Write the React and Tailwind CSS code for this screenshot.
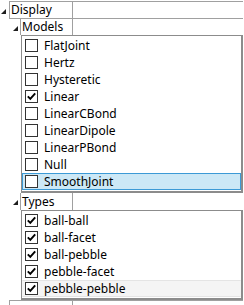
import React from 'react';

const models = [
  { label: 'FlatJoint' },
  { label: 'Hertz' },
  { label: 'Hysteretic' },
  { label: 'Linear', checked: true },
  { label: 'LinearCBond' },
  { label: 'LinearDipole' },
  { label: 'LinearPBond' },
  { label: 'Null' },
  { label: 'SmoothJoint', state: 'selected' },
];

const types = [
  { label: 'ball-ball', checked: true },
  { label: 'ball-facet', checked: true },
  { label: 'ball-pebble', checked: true },
  { label: 'pebble-facet', checked: true },
  { label: 'pebble-pebble', checked: true, state: 'hover' },
];

const Expander = () => (
  <svg width="5" height="5" viewBox="0 0 5 5">
    <path d="M5 0 L5 5 L0 5 Z" fill="#1e1e1e" />
  </svg>
);

const CheckBox = ({ checked }) => (
  <span className="w-[13px] h-[13px] shrink-0 border border-[#333] bg-white flex items-center justify-center">
    {checked && (
      <svg width="9" height="9" viewBox="0 0 9 9">
        <path d="M0.8 4.3 L3.3 6.9 L8.2 1.3" fill="none" stroke="#000" strokeWidth="1.9" />
      </svg>
    )}
  </span>
);

const Item = ({ label, checked, state }) => (
  <div
    className={`h-[17px] flex items-center pl-[2px] border ${
      state === 'selected'
        ? 'bg-[#cce8f6] border-[#3c9ad6]'
        : state === 'hover'
        ? 'bg-[#f4f4f4] border-x-transparent border-y-[#e4e4e4]'
        : 'border-transparent'
    }`}
  >
    <CheckBox checked={checked} />
    <span className="ml-[6px] leading-none">{label}</span>
  </div>
);

const ListBox = ({ items }) => (
  <div className="ml-[12px] mr-[1px] border border-[#8c8c8c] border-r-2 border-b-2 py-px">
    {items.map((it) => (
      <Item key={it.label} {...it} />
    ))}
  </div>
);

const HeaderRow = ({ label, gutter, top = true }) => (
  <div className={`flex h-[17px] mr-[1px] ${top ? 'border-t border-[#a0a0a0]' : 'h-[16px]'}`}>
    <div className={`${gutter} flex items-center justify-end pr-[2px] pt-[2px]`}>
      <Expander />
    </div>
    <div className="w-[52px] border-l border-[#a0a0a0] flex items-center pl-px leading-none">{label}</div>
    <div className="flex-1 border-l border-[#a0a0a0]" />
  </div>
);

export default function App() {
  return (
    <div className="w-[244px] h-[305px] overflow-hidden bg-white text-[12px] text-black font-['Noto_Sans',sans-serif] pt-px">
      {/* Display category */}
      <div className="flex h-[17px] mr-[1px]">
        <div className="w-[9px] flex items-center justify-end pr-[3px] pt-[3px]">
          <Expander />
        </div>
        <div className="flex flex-1 border-t border-[#a0a0a0]">
          <div className="w-[63px] border-l border-[#a0a0a0] flex items-center pl-px leading-none">Display</div>
          <div className="flex-1 border-l border-[#a0a0a0]" />
        </div>
      </div>
      <div className="ml-[9px]">
        <HeaderRow label="Models" gutter="w-[11px]" />
        <ListBox items={models} />
        <HeaderRow label="Types" gutter="w-[11px]" top={false} />
        <ListBox items={types} />
        <div className="flex h-[17px] border-t border-[#a0a0a0] mr-[1px]">
          <div className="w-[63px] border-l border-[#a0a0a0]" />
          <div className="flex-1 border-l border-[#a0a0a0]" />
        </div>
      </div>
    </div>
  );
}
